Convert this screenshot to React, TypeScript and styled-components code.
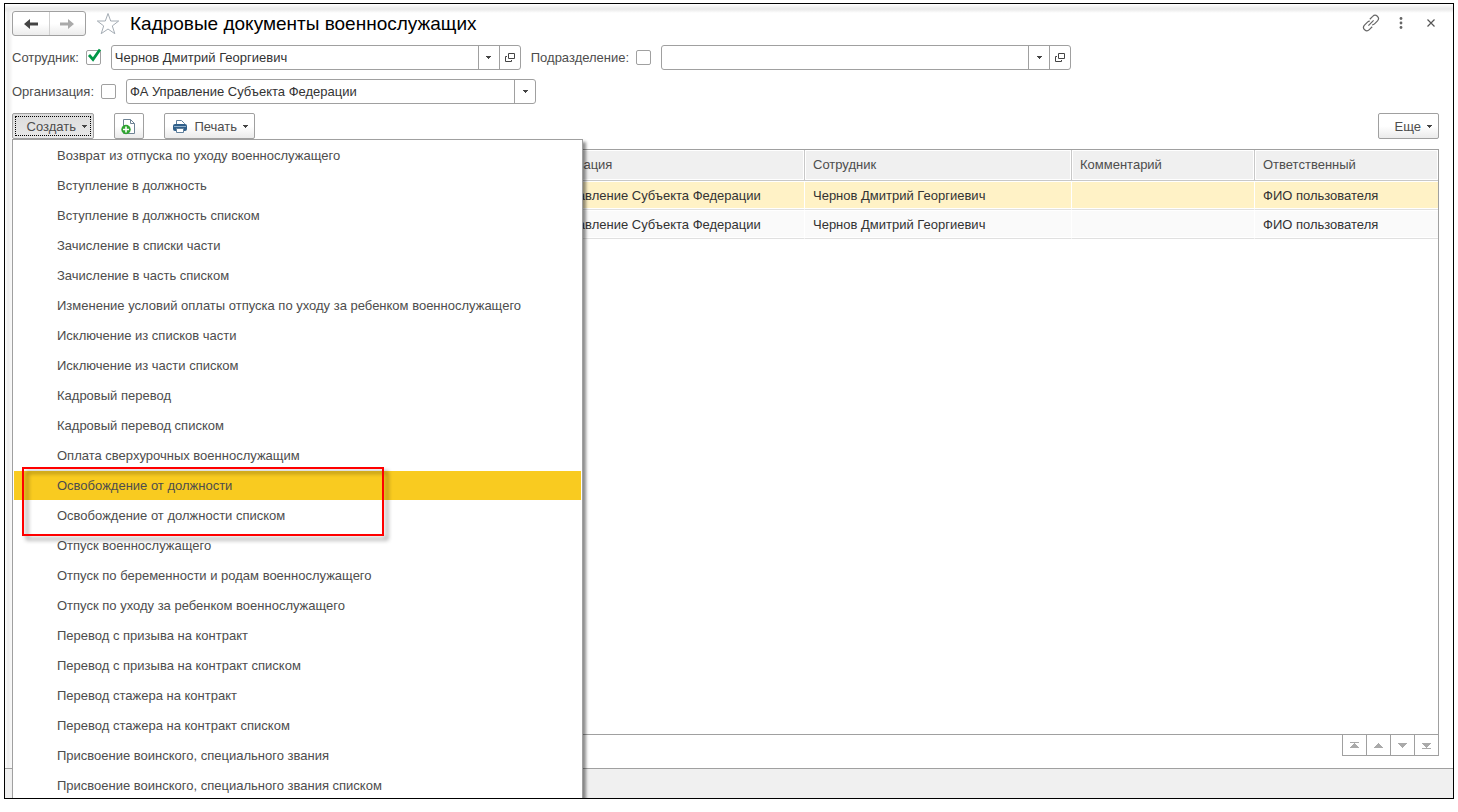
import React from "react";
import styled, { createGlobalStyle } from "styled-components";

const line = "#a0a0a0";

const GlobalStyle = createGlobalStyle`
  * { box-sizing: border-box; }
  body { margin: 0; background: #fff; }
  body, button, input, table {
    font-family: "Liberation Sans", Arial, sans-serif;
    font-size: 13px;
    line-height: 16px;
    color: #333;
  }
`;

const Frame = styled.main`
  position: relative;
  display: flex;
  flex-direction: column;
  min-height: calc(100vh - 16px);
  margin: 3px 4px 13px;
  border: 1px solid #000;
  overflow: hidden;
`;

const Workspace = styled.div`
  flex: 1;
  display: flex;
  flex-direction: column;
  padding: 7px 14px 12px 7px;
  background:
    linear-gradient(to bottom, #fff 0, #f4f4f4 2px, #e8e8e8 5px, rgba(255, 255, 255, 0) 9px) top / 100% 9px no-repeat,
    linear-gradient(to right, #fff 0, #ebebeb 3px, #fff 8px) left / 8px 100% no-repeat;
`;

const Footer = styled.footer`
  height: 30px;
  border-top: 1px solid ${line};
  background: #f0f0f0;
`;

const TitleBar = styled.header`
  display: flex;
  align-items: center;
  height: 25px;
`;

const NavGroup = styled.div`
  display: flex;
  width: 74px;
  height: 25px;
  border: 1px solid ${line};
  border-radius: 3px;
  background: linear-gradient(#fff 50%, #ececec);
`;

const NavButton = styled.button`
  flex: 1;
  display: grid;
  place-items: center;
  padding: 0;
  border: 0;
  background: none;
  & + & { border-left: 1px solid #d0d0d0; }
`;

const IconButton = styled.button`
  display: grid;
  place-items: center;
  width: 30px;
  height: 24px;
  padding: 0;
  border: 0;
  background: none;
`;

const StarButton = styled(IconButton)`
  width: 44px;
`;

const Title = styled.h1`
  flex: 1;
  margin: 0;
  font-size: 19px;
  line-height: 24px;
  font-weight: 400;
  color: #000;
`;

const WindowActions = styled.div`
  display: flex;
  align-self: flex-start;
  margin-right: -7px;
`;

const FilterRow = styled.div`
  display: flex;
  align-items: center;
  height: 25px;
  margin-top: 9px;
`;

const FilterLabel = styled.label`
  display: flex;
  align-items: center;
  gap: 7px;
  margin-right: 10px;
  color: #4d4d4d;
  white-space: nowrap;
`;

const CheckWrap = styled.span`
  position: relative;
  display: block;
  width: 15px;
  height: 15px;
`;

const CheckBox = styled.input`
  appearance: none;
  display: block;
  width: 15px;
  height: 15px;
  margin: 0;
  border: 1px solid ${line};
  border-radius: 2px;
  background: #fff;
`;

const Tick = styled.svg`
  position: absolute;
  left: 1px;
  top: -2px;
  pointer-events: none;
`;

const Field = styled.div<{ $width: number }>`
  display: flex;
  width: ${(p) => p.$width}px;
  height: 25px;
  margin-right: 10px;
  border: 1px solid ${line};
  border-radius: 3px;
  background: #fff;
  overflow: hidden;
`;

const FieldInput = styled.input`
  flex: 1;
  min-width: 0;
  padding: 0 3px;
  border: 0;
  background: none;
  outline: none;
`;

const FieldButton = styled.button`
  display: grid;
  place-items: center;
  width: 21px;
  padding: 0;
  border: 0;
  border-left: 1px solid ${line};
  background: none;
`;

const Toolbar = styled.div`
  display: flex;
  align-items: flex-start;
  height: 26px;
  margin: 9px 0 10px;
`;

const ToolButton = styled.button<{ $width: number; $pressed?: boolean }>`
  display: flex;
  align-items: center;
  justify-content: flex-end;
  gap: 6px;
  width: ${(p) => p.$width}px;
  height: 26px;
  margin-right: 20px;
  padding: 1px 6px 0;
  border: 1px solid ${line};
  border-radius: 2px;
  background: ${(p) => (p.$pressed ? "linear-gradient(#dcdcdc, #e8e8e8)" : "linear-gradient(#fff 50%, #ebebeb)")};
  color: #4d4d4d;
  outline: ${(p) => (p.$pressed ? "1px dotted #000" : "none")};
  outline-offset: -4px;
  &:last-child { margin: 0 0 0 auto; }
`;

const TableArea = styled.section`
  flex: 1;
  border: 1px solid ${line};
  background: #fff;
`;

const Grid = styled.table`
  width: 100%;
  table-layout: fixed;
  border-collapse: separate;
  border-spacing: 0;
`;

const HeadCell = styled.th`
  height: 31px;
  padding: 0 8px;
  border-bottom: 1px solid #c8c8c8;
  border-right: 1px solid #c8c8c8;
  background: #f0f0f0;
  box-shadow: inset 0 0 0 1px #fff;
  font-weight: 400;
  text-align: left;
  color: #4d4d4d;
  &:last-child { border-right: 0; }
`;

const Row = styled.tr<{ $selected?: boolean }>`
  background: ${(p) => (p.$selected ? "#fff2c6" : "#fafafa")};
`;

const Cell = styled.td`
  height: 29px;
  padding: 2px 8px 0;
  border-bottom: 1px solid #e0e0e0;
  border-right: 1px solid #fff;
  box-shadow: inset 0 1px #fff, inset 0 -1px #fff;
  &:last-child { border-right: 0; }
`;

const Pager = styled.div`
  display: flex;
  align-self: flex-end;
  margin-top: -1px;
  border: 1px solid ${line};
`;

const PagerButton = styled.button`
  display: grid;
  place-items: center;
  width: 24px;
  height: 20px;
  padding: 1px 0 0;
  border: 0;
  background: #fff;
  &:not(:last-child) { border-right: 1px solid ${line}; }
  &:last-child { width: 23px; }
`;

const Menu = styled.ul`
  position: absolute;
  z-index: 2;
  left: 7px;
  top: 135px;
  width: 571px;
  margin: 0;
  padding: 1px;
  border: 1px solid ${line};
  background: #fff;
  box-shadow: 3px 3px 3px rgba(0, 0, 0, 0.45);
  list-style: none;
`;

const MenuItem = styled.button<{ $active?: boolean }>`
  display: block;
  width: 100%;
  height: 29px;
  margin-bottom: 1px;
  padding: 0 43px;
  border: 0;
  background: ${(p) => (p.$active ? "#f9cb20" : "none")};
  color: #4d4d4d;
  text-align: left;
`;

const Highlight = styled.div`
  position: absolute;
  z-index: 3;
  left: 17px;
  top: 463px;
  width: 362px;
  height: 69px;
  border: 2px solid #f00;
  filter: drop-shadow(4px 4px 2px rgba(0, 0, 0, 0.45));
  pointer-events: none;
`;

const Caret = () => (
  <svg width="5" height="3" viewBox="0 0 5 3" shapeRendering="crispEdges" aria-hidden="true">
    <path d="M0 0h5v1H0zM1 1h3v1H1zM2 2h1v1H2z" fill="#444" />
  </svg>
);

const Arrow = ({ color, flip }: { color: string; flip?: boolean }) => (
  <svg width="16" height="12" viewBox="0 0 16 12" aria-hidden="true">
    <g transform={flip ? "matrix(-1 0 0 1 16 0)" : undefined}>
      <path d="M1 6l6-5v3.500h8v3H7V11z" fill={color} />
    </g>
  </svg>
);

const OpenIcon = () => (
  <svg width="12" height="11" viewBox="0 0 12 11" fill="none" stroke="#444" aria-hidden="true">
    <path d="M4.500 1.500h6v5h-6zM3 4.500H1.500v5h6V8" />
  </svg>
);

const pagerShapes = [
  "M1 0h9v1H1zM5 1h1v1H5zM4 2h3v1H4zM3 3h5v1H3zM2 4h7v1H2zM1 5h9v1H1z",
  "M5 1h1v1H5zM4 2h3v1H4zM3 3h5v1H3zM2 4h7v1H2zM1 5h9v1H1z",
  "M1 1h9v1H1zM2 2h7v1H2zM3 3h5v1H3zM4 4h3v1H4zM5 5h1v1H5z",
  "M1 1h9v1H1zM2 2h7v1H2zM3 3h5v1H3zM4 4h3v1H4zM5 5h1v1H5zM1 6h9v1H1z",
];
const pagerLabels = ["В начало", "Вверх", "Вниз", "В конец"];

const menuItems = [
  "Возврат из отпуска по уходу военнослужащего",
  "Вступление в должность",
  "Вступление в должность списком",
  "Зачисление в списки части",
  "Зачисление в часть списком",
  "Изменение условий оплаты отпуска по уходу за ребенком военнослужащего",
  "Исключение из списков части",
  "Исключение из части списком",
  "Кадровый перевод",
  "Кадровый перевод списком",
  "Оплата сверхурочных военнослужащим",
  "Освобождение от должности",
  "Освобождение от должности списком",
  "Отпуск военнослужащего",
  "Отпуск по беременности и родам военнослужащего",
  "Отпуск по уходу за ребенком военнослужащего",
  "Перевод с призыва на контракт",
  "Перевод с призыва на контракт списком",
  "Перевод стажера на контракт",
  "Перевод стажера на контракт списком",
  "Присвоение воинского, специального звания",
  "Присвоение воинского, специального звания списком",
];

const rows = [
  ["", "ФА Управление Субъекта Федерации", "Чернов Дмитрий Георгиевич", "", "ФИО пользователя"],
  ["", "ФА Управление Субъекта Федерации", "Чернов Дмитрий Георгиевич", "", "ФИО пользователя"],
];

type FilterProps = { label: string; value: string; checked?: boolean; width: number; openable?: boolean };

const Filter = ({ label, value, checked, width, openable }: FilterProps) => (
  <>
    <FilterLabel>
      {label}
      <CheckWrap>
        <CheckBox type="checkbox" defaultChecked={checked} />
        {checked && (
          <Tick width="15" height="15" viewBox="0 0 15 15" fill="none" aria-hidden="true">
            <path d="M2 7l4 4.500L13 1.500" stroke="#009646" strokeWidth="2.800" />
          </Tick>
        )}
      </CheckWrap>
    </FilterLabel>
    <Field $width={width}>
      <FieldInput aria-label={label} defaultValue={value} />
      <FieldButton aria-label="Выбрать"><Caret /></FieldButton>
      {openable && <FieldButton aria-label="Открыть"><OpenIcon /></FieldButton>}
    </Field>
  </>
);

export default function App() {
  return (
    <>
      <GlobalStyle />
      <Frame>
        <Workspace>
          <TitleBar>
            <NavGroup>
              <NavButton aria-label="Назад"><Arrow color="#444" /></NavButton>
              <NavButton aria-label="Вперед"><Arrow color="#aaa" flip /></NavButton>
            </NavGroup>
            <StarButton aria-label="Добавить в избранное">
              <svg width="24" height="24" viewBox="0 0 24 24" fill="#fff" stroke="#a4acb4" aria-hidden="true">
                <path d="M12 1.500l2.700 7.500h8l-6.400 4.900 2.500 7.800L12 17l-6.800 4.700 2.500-7.800L1.300 9h8z" />
              </svg>
            </StarButton>
            <Title>Кадровые документы военнослужащих</Title>
            <WindowActions>
              <IconButton aria-label="Ссылка">
                <svg width="18" height="18" viewBox="0 0 18 18" fill="none" stroke="#666" strokeWidth="1.200" aria-hidden="true">
                  <path d="M7.800 5.200L10.700 2.400a3.200 3.200 0 0 1 4.800 4.500l-3 3a3.200 3.200 0 0 1-2.300.9" />
                  <path d="M10.200 12.800L7.300 15.600a3.200 3.200 0 0 1-4.800-4.500l3-3a3.200 3.200 0 0 1 2.300-.9" />
                  <path d="M6.400 11.600l5.200-5.200" />
                </svg>
              </IconButton>
              <IconButton aria-label="Меню">
                <svg width="4" height="12" viewBox="0 0 4 12" fill="#666" aria-hidden="true">
                  <circle cx="2" cy="1.500" r="1.400" /><circle cx="2" cy="6" r="1.400" /><circle cx="2" cy="10.500" r="1.400" />
                </svg>
              </IconButton>
              <IconButton aria-label="Закрыть">
                <svg width="8" height="8" viewBox="0 0 8 8" stroke="#555" strokeWidth="1.200" aria-hidden="true">
                  <path d="M.5.500l7 7M7.500.500l-7 7" />
                </svg>
              </IconButton>
            </WindowActions>
          </TitleBar>
          <FilterRow>
            <Filter label="Сотрудник:" value="Чернов Дмитрий Георгиевич" checked width={410} openable />
            <Filter label="Подразделение:" value="" width={410} openable />
          </FilterRow>
          <FilterRow>
            <Filter label="Организация:" value="ФА Управление Субъекта Федерации" width={410} />
          </FilterRow>
          <Toolbar>
            <ToolButton $width={82} $pressed aria-expanded="true">Создать <Caret /></ToolButton>
            <ToolButton $width={30} aria-label="Создать копированием">
              <svg width="16" height="16" viewBox="0 0 16 16" aria-hidden="true">
                <path d="M2.500.500h7l4 4v10h-11z" fill="#fff" stroke="#6d8294" />
                <path d="M9.500.500v4h4" fill="none" stroke="#6d8294" />
                <circle cx="5" cy="10.500" r="4.700" fill="#2fa52f" />
                <path d="M5 7.500v6M2 10.500h6" stroke="#fff" strokeWidth="1.600" />
              </svg>
            </ToolButton>
            <ToolButton $width={91}>
              <svg width="16" height="16" viewBox="0 0 16 16" aria-hidden="true">
                <path d="M4.500 6V1.500h5l3 3V6" fill="#fff" stroke="#5f7f9c" />
                <rect x="1" y="5" width="14" height="7" rx="2" fill="#2f5f8a" />
                <path d="M2 7.500h12" stroke="#8fb0cc" />
                <path d="M4.500 9.500h7v4h-7z" fill="#fff" stroke="#5f7f9c" />
              </svg>
              Печать <Caret />
            </ToolButton>
            <ToolButton $width={61}>Еще <Caret /></ToolButton>
          </Toolbar>
          <TableArea>
            <Grid>
              <colgroup>
                <col width="513" /><col width="279" /><col width="267" /><col width="183" /><col />
              </colgroup>
              <thead>
                <tr>
                  {["", "Организация", "Сотрудник", "Комментарий", "Ответственный"].map((h) => (
                    <HeadCell key={h}>{h}</HeadCell>
                  ))}
                </tr>
              </thead>
              <tbody>
                {rows.map((cells, i) => (
                  <Row key={i} $selected={i === 0}>
                    {cells.map((c, j) => <Cell key={j}>{c}</Cell>)}
                  </Row>
                ))}
              </tbody>
            </Grid>
          </TableArea>
          <Pager>
            {pagerShapes.map((d, i) => (
              <PagerButton key={d} aria-label={pagerLabels[i]}>
                <svg width="11" height="7" viewBox="0 0 11 7" fill="#aaa" shapeRendering="crispEdges" aria-hidden="true"><path d={d} /></svg>
              </PagerButton>
            ))}
          </Pager>
        </Workspace>
        <Footer />
        <Menu>
          {menuItems.map((text, i) => (
            <li key={text}><MenuItem $active={i === 11}>{text}</MenuItem></li>
          ))}
        </Menu>
        <Highlight />
      </Frame>
    </>
  );
}
